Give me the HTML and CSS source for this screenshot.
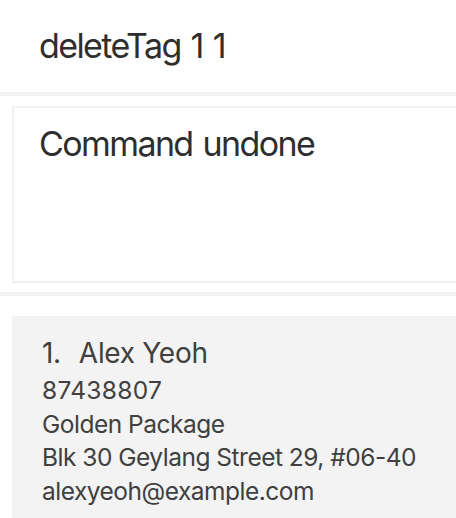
FILE: index.html
```html
<!DOCTYPE html>
<html>
<head>
<meta charset="utf-8">
<link rel="stylesheet" href="styles.css">
</head>
<body>
<div class="app">
  <div class="command-box">
    <div class="command-text">deleteTag 1 1</div>
  </div>
  <div class="divider"></div>
  <div class="result-pane">
    <div class="result-box">
      <div class="result-text">Command undone</div>
    </div>
  </div>
  <div class="divider"></div>
  <div class="list-pane">
    <div class="card">
      <div class="card-name"><span class="card-index">1.</span>Alex Yeoh</div>
      <div class="card-line card-phone">87438807</div>
      <div class="card-line">Golden Package</div>
      <div class="card-line">Blk 30 Geylang Street 29, #06-40</div>
      <div class="card-line">alexyeoh@example.com</div>
    </div>
  </div>
</div>
</body>
</html>
```

FILE: styles.css
```css
html, body {
  margin: 0;
  padding: 0;
  background: #ffffff;
  overflow: hidden;
}

.app {
  width: 456px;
  height: 518px;
  overflow: hidden;
  font-family: Inter, "Noto Sans", sans-serif;
}

.command-box {
  height: 92px;
  box-sizing: border-box;
  padding: 26px 0 0 39px;
}

.command-text,
.result-text {
  font-size: 34px;
  line-height: 40px;
  letter-spacing: -1.6px;
  word-spacing: 2px;
  color: #2e2e2e;
  white-space: nowrap;
}

.divider {
  height: 4px;
  background: #f3f3f3;
}

.result-pane {
  padding: 10px 0 9px 12px;
}

.result-box {
  width: 470px;
  height: 177px;
  box-sizing: border-box;
  border: 2px solid #f1f1f1;
  padding: 16px 0 0 25px;
}

.list-pane {
  padding: 20px 0 0 12px;
}

.card {
  width: 470px;
  background: #f3f3f3;
  box-sizing: border-box;
  padding: 16px 0 20px 30px;
  color: #404040;
  white-space: nowrap;
}

.card-name {
  font-size: 28px;
  line-height: 42px;
  letter-spacing: -0.3px;
}

.card-index {
  margin-right: 18px;
}

.card-line {
  font-size: 24.5px;
  line-height: 33.5px;
  letter-spacing: -0.5px;
}

.card-phone {
  letter-spacing: 0.3px;
}
```
